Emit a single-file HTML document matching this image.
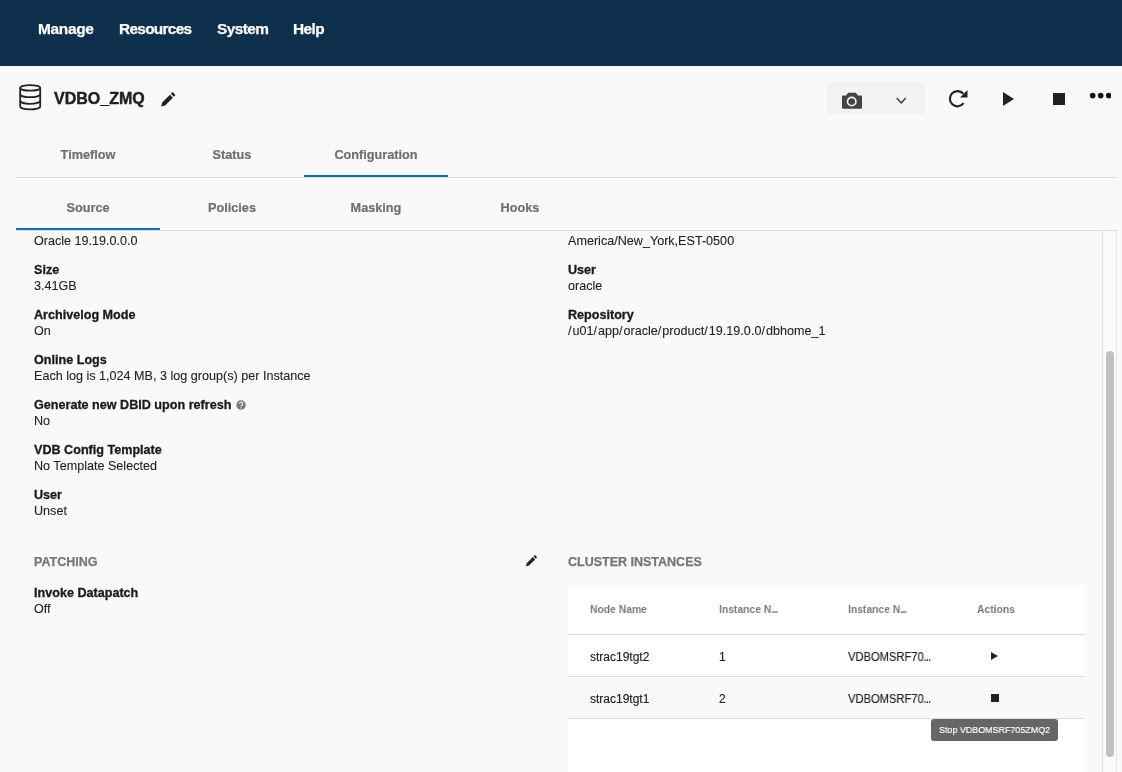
<!DOCTYPE html>
<html>
<head>
<meta charset="utf-8">
<style>
*{box-sizing:border-box;margin:0;padding:0}
html,body{width:1122px;height:772px;overflow:hidden;background:#f9f9f9;font-family:"Liberation Sans",sans-serif;color:#222}
.abs{position:absolute;white-space:nowrap}
#nav{position:absolute;left:0;top:0;width:1122px;height:66px;background:#0f304d}
.navi{position:absolute;top:20px;font-size:15.4px;line-height:18px;font-weight:bold;color:#fff;letter-spacing:-0.55px;-webkit-text-stroke:0.25px #fff}
.title{position:absolute;left:54px;top:89px;font-size:16px;line-height:20px;font-weight:bold;color:#222;-webkit-text-stroke:0.45px #222}
.tab{position:absolute;width:144px;text-align:center;font-size:12.7px;line-height:16px;font-weight:bold;color:#6f6f6f;-webkit-text-stroke:0.2px #6f6f6f}
.hline{position:absolute;height:1px;background:#dcdcdc}
.uline{position:absolute;height:2px;background:#0a6fc2}
.lbl{position:absolute;font-size:12.6px;line-height:16px;font-weight:bold;color:#1a1a1a;white-space:nowrap;-webkit-text-stroke:0.3px #1a1a1a}
.val{position:absolute;font-size:12.6px;line-height:16px;color:#1e1e1e;white-space:nowrap;-webkit-text-stroke:0.1px #1e1e1e}
.sect{position:absolute;font-size:12.5px;line-height:16px;font-weight:bold;color:#767676;white-space:nowrap;-webkit-text-stroke:0.25px #767676}
.th{position:absolute;font-size:11.5px;line-height:14px;font-weight:bold;color:#7a7a7a;white-space:nowrap;transform:scaleX(0.9);transform-origin:0 0}
.td{position:absolute;font-size:12px;line-height:14px;color:#222;white-space:nowrap;-webkit-text-stroke:0.15px #222}
.sl{letter-spacing:1px}
.ell{letter-spacing:-1px}
div,span,svg{will-change:transform}
</style>
</head>
<body>
<div id="nav">
  <div class="navi" style="left:38px;letter-spacing:-0.3px">Manage</div>
  <div class="navi" style="left:118.5px;letter-spacing:-0.7px">Resources</div>
  <div class="navi" style="left:217px">System</div>
  <div class="navi" style="left:293px">Help</div>
</div>

<!-- db icon -->
<svg class="abs" style="left:18px;top:83px" width="25" height="29" viewBox="0 0 25 29">
  <g fill="none" stroke="#222" stroke-width="1.8">
    <ellipse cx="12.2" cy="4.9" rx="10" ry="2.8"/>
    <path d="M2.2 4.9 V23.5 A10 2.9 0 0 0 22.2 23.5 V4.9"/>
    <path d="M2.2 11.2 A10 3 0 0 0 22.2 11.2"/>
    <path d="M2.2 17.8 A10 3 0 0 0 22.2 17.8"/>
  </g>
</svg>
<div class="title">VDBO_ZMQ</div>
<!-- pencil -->
<svg class="abs" style="left:155px;top:86px" width="30" height="26" viewBox="0 0 30 26"><path fill="#222" d="M6.10 20.50 L7.16 16.47 L14.94 8.69 L17.91 11.66 L10.13 19.44 Z M15.79 7.84 L17.56 6.08 L20.52 9.04 L18.76 10.81 Z"/></svg>

<!-- right buttons -->
<div class="abs" style="left:827px;top:82px;width:98px;height:32px;background:#f2f2f2;border-radius:4px"></div>
<svg class="abs" style="left:840px;top:91px" width="24" height="19" viewBox="0 0 24 19">
  <path fill="#444" d="M8 1.7 H16 L17.8 4.5 H20.8 Q22 4.5 22 5.7 V16.5 Q22 17.7 20.8 17.7 H3.2 Q2 17.7 2 16.5 V5.7 Q2 4.5 3.2 4.5 H6.2 Z"/>
  <circle cx="11.7" cy="10.5" r="4.2" fill="none" stroke="#f2f2f2" stroke-width="1.7"/>
</svg>
<svg class="abs" style="left:894px;top:95px" width="14" height="10" viewBox="0 0 14 10"><path d="M2.7 2.9 L7.3 7.8 L11.8 2.9" fill="none" stroke="#444" stroke-width="1.5"/></svg>

<svg class="abs" style="left:946px;top:88px" width="24" height="22" viewBox="0 0 24 22">
  <path d="M17.6 15.2 A7.6 7.6 0 1 1 17.3 5.8" fill="none" stroke="#222" stroke-width="2.2"/>
  <path d="M21.5 2 V9.5 H14 Z" fill="#222"/>
</svg>
<svg class="abs" style="left:1002px;top:91px" width="13" height="16" viewBox="0 0 13 16"><path d="M1 1 L12 8 L1 15 Z" fill="#222"/></svg>
<div class="abs" style="left:1053px;top:93px;width:12px;height:12px;background:#222"></div>
<svg class="abs" style="left:1088px;top:90px" width="23" height="10" viewBox="0 0 23 10">
  <circle cx="4.7" cy="5.6" r="2.8" fill="#111"/><circle cx="12.7" cy="5.6" r="2.8" fill="#111"/><circle cx="20.7" cy="5.6" r="2.8" fill="#111"/>
</svg>

<!-- tabs -->
<div class="tab" style="left:16px;top:147px">Timeflow</div>
<div class="tab" style="left:160px;top:147px">Status</div>
<div class="tab" style="left:304px;top:147px">Configuration</div>
<div class="hline" style="left:16px;top:177px;width:1101px"></div>
<div class="uline" style="left:304px;top:175px;width:144px"></div>

<div class="tab" style="left:16px;top:200px">Source</div>
<div class="tab" style="left:160px;top:200px">Policies</div>
<div class="tab" style="left:304px;top:200px">Masking</div>
<div class="tab" style="left:448px;top:200px">Hooks</div>
<div class="hline" style="left:16px;top:230px;width:1101px"></div>
<div class="uline" style="left:16px;top:228px;width:144px"></div>

<!-- scrollbar -->
<div class="abs" style="left:1102px;top:231px;width:15px;height:541px;border-left:1px solid #e6e6e6;border-right:1px solid #e6e6e6;background:#fafafa"></div>
<div class="abs" style="left:1106px;top:351px;width:8px;height:406px;border-radius:4px;background:#c1c1c1"></div>

<!-- content left -->
<div class="val" style="left:34px;top:233px">Oracle 19.19.0.0.0</div>
<div class="lbl" style="left:34px;top:262px">Size</div>
<div class="val" style="left:34px;top:278px">3.41GB</div>
<div class="lbl" style="left:34px;top:307px">Archivelog Mode</div>
<div class="val" style="left:34px;top:323px">On</div>
<div class="lbl" style="left:34px;top:352px">Online Logs</div>
<div class="val" style="left:34px;top:368px">Each log is 1,024 MB, 3 log group(s) per Instance</div>
<div class="lbl" style="left:34px;top:397px">Generate new DBID upon refresh</div>
<svg class="abs" style="left:236px;top:399.5px" width="10" height="10" viewBox="0 0 10 10"><circle cx="5" cy="5" r="4.7" fill="#777"/><path d="M3.4 3.8 A1.65 1.65 0 1 1 5.9 5.2 C5.3 5.6 5.05 5.8 5.05 6.5" fill="none" stroke="#f9f9f9" stroke-width="1.1"/><circle cx="5.05" cy="7.9" r="0.65" fill="#f9f9f9"/></svg>
<div class="val" style="left:34px;top:413px">No</div>
<div class="lbl" style="left:34px;top:442px">VDB Config Template</div>
<div class="val" style="left:34px;top:458px">No Template Selected</div>
<div class="lbl" style="left:34px;top:487px">User</div>
<div class="val" style="left:34px;top:503px">Unset</div>

<!-- content right -->
<div class="val" style="left:568px;top:233px">America<span class="sl2">/</span>New_York,EST-0500</div>
<div class="lbl" style="left:568px;top:262px">User</div>
<div class="val" style="left:568px;top:278px">oracle</div>
<div class="lbl" style="left:568px;top:307px">Repository</div>
<div class="val" style="left:568px;top:323px"><span class="sl">/</span>u01<span class="sl">/</span>app<span class="sl">/</span>oracle<span class="sl">/</span>product<span class="sl">/</span>19.19.0.0<span class="sl">/</span>dbhome_1</div>

<!-- patching -->
<div class="sect" style="left:34px;top:554px">PATCHING</div>
<svg class="abs" style="left:521px;top:550.5px" width="22" height="20" viewBox="0 0 22 20"><path fill="#222" d="M4.90 15.30 L5.73 12.16 L11.79 6.09 L14.11 8.41 L8.04 14.47 Z M12.46 5.43 L13.83 4.05 L16.15 6.37 L14.77 7.74 Z"/></svg>
<div class="lbl" style="left:34px;top:585px">Invoke Datapatch</div>
<div class="val" style="left:34px;top:601px">Off</div>

<!-- cluster -->
<div class="sect" style="left:568px;top:554px">CLUSTER INSTANCES</div>
<div class="abs" style="left:568px;top:585px;width:516px;height:187px;background:#fff"></div>
<div class="abs" style="left:568px;top:676px;width:516px;height:42px;background:#f9f9f9"></div>
<div class="hline" style="left:568px;top:634px;width:516px"></div>
<div class="hline" style="left:568px;top:676px;width:516px"></div>
<div class="hline" style="left:568px;top:718px;width:516px"></div>
<div class="th" style="left:590px;top:602px">Node Name</div>
<div class="th" style="left:719px;top:602px">Instance N<span class="ell">...</span></div>
<div class="th" style="left:848px;top:602px">Instance N<span class="ell">...</span></div>
<div class="th" style="left:977px;top:602px">Actions</div>
<div class="td" style="left:590px;top:650px">strac19tgt2</div>
<div class="td" style="left:719px;top:650px">1</div>
<div class="td" style="left:848px;top:650px"><span style="display:inline-block;transform:scaleX(0.93);transform-origin:0 0">VDBOMSRF70<span class="ell">...</span></span></div>
<svg class="abs" style="left:990px;top:651px" width="9" height="10" viewBox="0 0 9 10"><path d="M1 1 L8 5 L1 9 Z" fill="#222"/></svg>
<div class="td" style="left:590px;top:692px">strac19tgt1</div>
<div class="td" style="left:719px;top:692px">2</div>
<div class="td" style="left:848px;top:692px"><span style="display:inline-block;transform:scaleX(0.93);transform-origin:0 0">VDBOMSRF70<span class="ell">...</span></span></div>
<div class="abs" style="left:991px;top:694px;width:8px;height:8px;background:#222"></div>

<!-- tooltip -->
<div class="abs" style="left:931px;top:719px;width:127px;height:22px;background:#666;border-radius:3px;color:#fff;font-size:9.6px;line-height:22px;"><span style="position:absolute;left:8px;top:0;display:inline-block;transform:scaleX(0.93);transform-origin:0 0;-webkit-text-stroke:0.2px #fff">Stop VDBOMSRF705ZMQ2</span></div>
</body>
</html>
